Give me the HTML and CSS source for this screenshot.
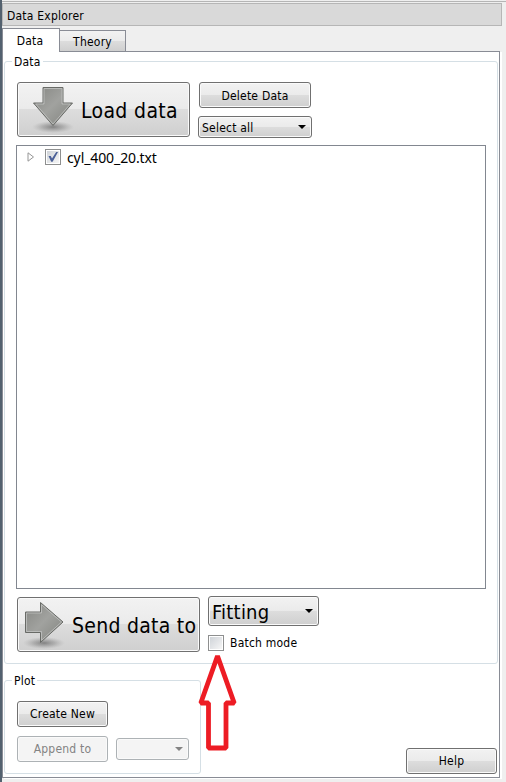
FILE: index.html
```html
<!DOCTYPE html>
<html lang="en">
<head>
<meta charset="utf-8">
<title>Data Explorer</title>
<link rel="stylesheet" href="styles.css">
</head>
<body>
<div class="window">
  <header class="titlebar">Data Explorer</header>
  <nav class="tabs"><span class="tab active">Data</span><span class="tab">Theory</span></nav>
  <main class="panel">
    <section class="group data-group">
      <h2 class="legend">Data</h2>
      <div class="load-row">
        <button class="btn big load">
          <svg class="icon" width="44" height="50" viewBox="0 0 44 50">
            <defs>
              <linearGradient id="metal" x1="0" y1="0" x2="1" y2="1"><stop offset="0" stop-color="#858682"/><stop offset=".48" stop-color="#a1a29f"/><stop offset="1" stop-color="#80827d"/></linearGradient>
              <radialGradient id="shade"><stop offset="0" stop-color="#555" stop-opacity=".65"/><stop offset=".5" stop-color="#777" stop-opacity=".4"/><stop offset="1" stop-color="#999" stop-opacity="0"/></radialGradient>
            </defs>
            <ellipse cx="22" cy="42" rx="21" ry="6" fill="url(#shade)"/>
            <path d="M12 2.500H32V18H41.500L22 40.500 2.500 18H12Z" fill="url(#metal)" stroke="#686a66"/>
            <path d="M13 3.500H31V19H39.300L22 39 4.700 19H13Z" fill="none" stroke="#c2c3c1" stroke-width=".8"/>
          </svg>
          <span class="load-text">Load data</span>
        </button>
        <div class="side">
          <button class="btn delete"><span>Delete Data</span></button>
          <div class="combo select"><span>Select all</span><i class="caret"></i></div>
        </div>
      </div>
      <div class="list">
        <div class="item">
          <svg class="expand" width="8" height="10" viewBox="0 0 8 10"><path d="M1 .8 6.500 5 1 9.200Z" fill="#fff" stroke="#969696"/></svg>
          <span class="check"><svg width="12" height="12" viewBox="0 0 12 12"><path d="M1.500 5 3.800 5 5 7.500 9.200 1H11L5.600 10.800H4.200Z" fill="#4a5f97"/></svg></span>
          <span class="file">cyl_400_20.txt</span>
        </div>
      </div>
      <div class="send-row">
        <button class="btn big send">
          <svg class="icon" width="44" height="50" viewBox="0 0 44 50">
            <ellipse cx="22" cy="43" rx="21" ry="6" fill="url(#shade)"/>
            <path d="M3.500 12H18.500V2.500L41 22 18.500 42.500V32.500H3.500Z" fill="url(#metal)" stroke="#686a66"/>
            <path d="M4.500 13H19.500V4.700L39.500 22 19.500 40.300V31.500H4.500Z" fill="none" stroke="#c2c3c1" stroke-width=".8"/>
          </svg>
          <span class="send-text">Send data to</span>
        </button>
        <div class="side">
          <div class="combo fitting"><span>Fitting</span><i class="caret"></i></div>
          <label class="batch"><span class="check"></span><span class="batch-text">Batch mode</span></label>
        </div>
      </div>
    </section>
    <div class="bottom">
      <section class="group plot-group">
        <h2 class="legend">Plot</h2>
        <button class="btn create"><span>Create New</span></button>
        <div class="append-row">
          <button class="btn append off"><span>Append to</span></button>
          <div class="combo target off"><i class="caret"></i></div>
        </div>
      </section>
      <button class="btn help"><span>Help</span></button>
    </div>
  </main>
  <svg class="pointer" width="40" height="98" viewBox="0 0 40 98"><path d="M19.500 3 2.800 50H10.500V95H28V50H36.200Z" fill="#fff" stroke="#ed1c24" stroke-width="4.800" stroke-linejoin="bevel"/></svg>
</div>
</body>
</html>
```

FILE: styles.css
```css
* { box-sizing: border-box; }
body {
  margin: 0;
  background: #efefef;
  color: #000;
  font: 12px/16px "DejaVu Sans Condensed", "DejaVu Sans", sans-serif;
  font-stretch: condensed;
  letter-spacing: .22px;
}
.window {
  position: relative;
  width: 506px;
  height: 782px;
  padding-top: 3px;
  border-left: 2px solid #53616f;
  background: linear-gradient(#b5b5b5, #b5b5b5) 0 1px / 100% 1px no-repeat #efefef;
  overflow: hidden;
}
.titlebar {
  width: 500px;
  height: 23px;
  padding: 4px 0 0 4px;
  border: 1px solid #b6b6b6;
  background: #d9d9d9;
}
.tabs { display: flex; align-items: flex-end; height: 25px; }
.tab {
  width: 66px;
  height: 21px;
  padding-top: 3px;
  text-align: center;
  border: 1px solid #898c95;
  border-left: 0;
  border-bottom: 0;
  background: linear-gradient(#f2f2f2, #ebebeb 48%, #dddddd 50%, #cfcfcf);
}
.tab.active {
  position: relative;
  width: 58px;
  height: 24px;
  margin-bottom: -1px;
  padding: 4px 2px 0 0;
  border-left: 1px solid #898c95;
  background: #fff;
}
.panel {
  width: 498px;
  height: 727px;
  padding: 9px 2px 0 2px;
  border: 1px solid #898c95;
  background: #fff;
  box-shadow: 2px 1px 0 #fff;
}
.group {
  position: relative;
  border: 1px solid #d5dfe5;
  border-radius: 3px;
}
.legend {
  position: absolute;
  top: -8px;
  left: 7px;
  margin: 0;
  padding: 0 2px;
  font-size: inherit;
  font-weight: normal;
  background: #fff;
}
.data-group { height: 603px; padding: 20px 10px 0 12px; margin: 0 -1px 0 -1px; }
.btn, .combo {
  display: flex;
  align-items: center;
  justify-content: center;
  padding: 0;
  font: inherit;
  letter-spacing: inherit;
  color: inherit;
  white-space: nowrap;
  border: 1px solid #707070;
  border-radius: 3px;
  background: linear-gradient(#f2f2f2, #ebebeb 48%, #dddddd 50%, #cfcfcf);
  box-shadow: inset 0 0 0 1px #fafafa;
}
.load-row, .send-row, .append-row { display: flex; }
.load-row { height: 63px; }
.big { height: 55px; justify-content: flex-start; font-size: 21px; line-height: 28px; letter-spacing: .35px; }
.load { width: 173px; padding-left: 13px; }
.load-text { margin-left: 6px; padding-top: 3px; }
.side { margin-left: 8px; }
.delete { width: 112px; height: 26px; margin-left: 1px; }
.delete span { padding-top: 1px; }
.combo { position: relative; justify-content: flex-start; }
.select { width: 114px; height: 22px; margin-top: 8px; padding-left: 3px; }
.select span { padding-top: 1px; }
.caret {
  width: 8px;
  height: 4px;
  margin-left: auto;
  margin-right: 5px;
  background: #000;
  clip-path: polygon(0 0, 100% 0, 50% 100%);
}
.list {
  width: 470px;
  height: 444px;
  margin-left: -1px;
  border: 1px solid #828790;
  background: #fff;
}
.item { display: flex; align-items: center; height: 22px; padding-left: 10px; }
.check {
  display: flex;
  width: 16px;
  height: 16px;
  padding: 1px;
  border: 1px solid #8e8f8f;
  background: linear-gradient(135deg, #cfd3d8, #f6f6f6) content-box #f4f4f4;
}
.item .check { margin-left: 10px; }
.file { margin-left: 6px; padding-top: 1px; font: 14px/18px "Noto Sans", "Open Sans", sans-serif; letter-spacing: -.1px; }
.send-row { padding-top: 8px; }
.send { width: 183px; padding-left: 4px; }
.send-text { margin-left: 6px; padding-top: 2px; letter-spacing: .27px; }
.send-row .side { margin-top: -1px; }
.fitting { width: 111px; height: 30px; padding-left: 3px; font-size: 20px; line-height: 26px; }
.fitting span { padding-top: 1px; }
.batch { display: flex; align-items: center; margin-top: 8px; }
.batch-text { margin-left: 6px; padding-top: 1px; }
.bottom { display: flex; justify-content: space-between; align-items: flex-end; height: 110px; }
.plot-group { width: 197px; height: 94px; padding: 20px 10px 0 12px; margin-left: -1px; }
.create, .append { width: 91px; height: 26px; }
.append-row { margin-top: 9px; align-items: center; }
.target { width: 73px; height: 22px; margin-left: 8px; }
.off { color: #838383; border-color: #adb2b5; background: #f4f4f4; }
.off .caret { background: #838383; }
.help { width: 91px; height: 26px; }
.pointer { position: absolute; left: 196px; top: 653px; }
```
